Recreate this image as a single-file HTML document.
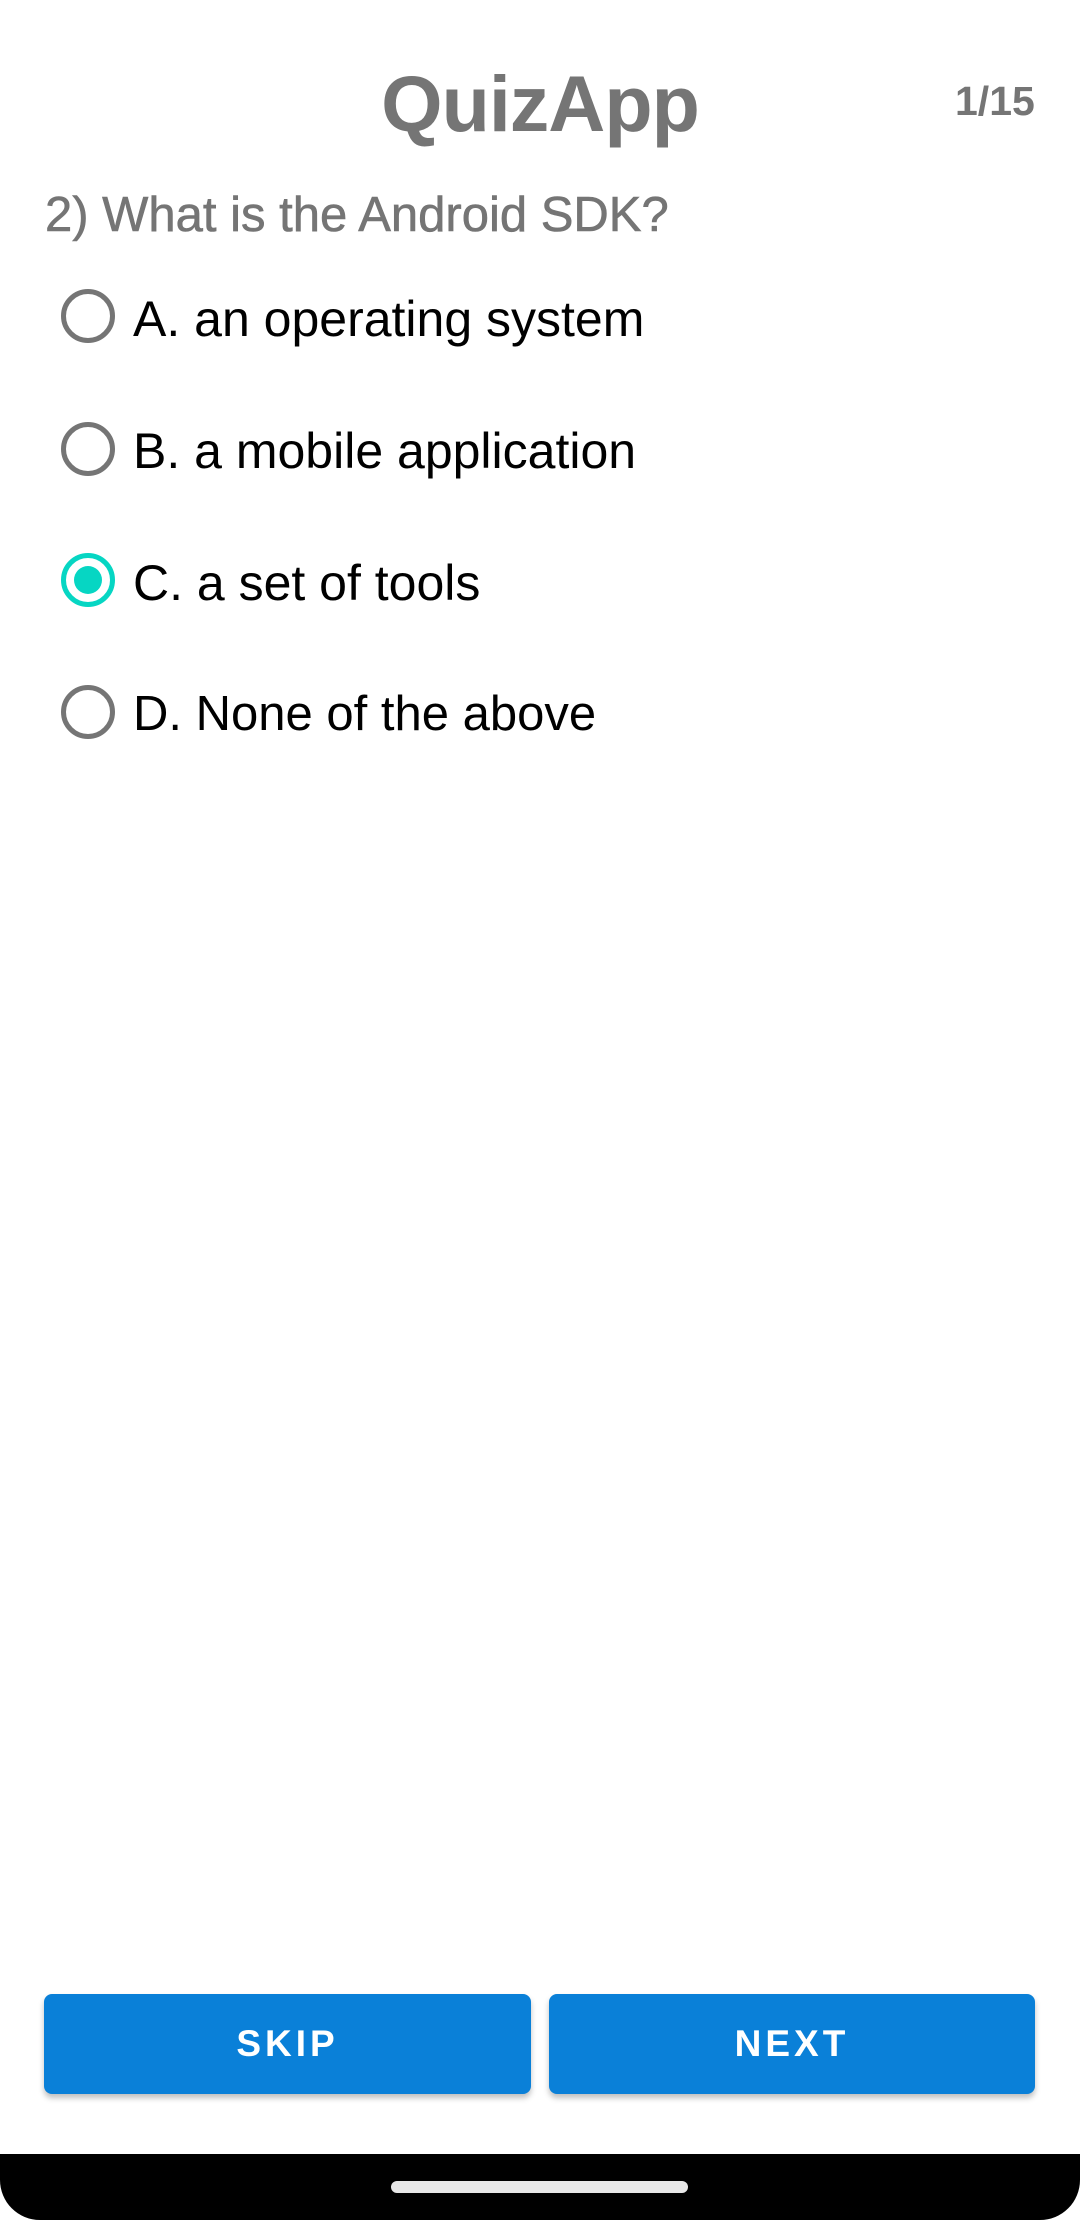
<!DOCTYPE html>
<html><head><meta charset="utf-8"><style>
html,body{margin:0;padding:0;background:#fff;}
body{width:1080px;height:2220px;position:relative;overflow:hidden;font-family:"Liberation Sans",sans-serif;}
.t{position:absolute;white-space:nowrap;line-height:1;}
.radio{position:absolute;left:61px;width:44px;height:44px;border:5px solid #757575;border-radius:50%;}
.radio.on{border-color:#06d6c3;}
.radio.on::after{content:"";position:absolute;left:8px;top:8px;width:28px;height:28px;border-radius:50%;background:#06d6c3;}
.btn{position:absolute;top:1994px;height:100px;background:#0a80d8;border-radius:8px;box-shadow:0 4px 6px rgba(0,0,0,0.25);color:#fff;font-size:37px;font-weight:bold;letter-spacing:4px;text-align:center;line-height:100px;}
</style></head><body>
<div class="t" style="left:0;width:1080px;text-align:center;top:64px;font-size:79px;font-weight:bold;color:#757575;letter-spacing:-1px;">QuizApp</div>
<div class="t" style="left:955px;top:81px;font-size:41px;font-weight:bold;color:#757575;">1/15</div>
<div class="t" style="left:45px;top:191px;font-size:49px;color:#757575;-webkit-text-stroke:0.6px #757575;">2) What is the Android SDK?</div>

<div class="radio" style="top:289px;"></div>
<div class="t" style="left:133px;top:294px;font-size:50px;color:#000;">A. an operating system</div>
<div class="radio" style="top:422px;"></div>
<div class="t" style="left:133px;top:426px;font-size:50px;color:#000;">B. a mobile application</div>
<div class="radio on" style="top:553px;"></div>
<div class="t" style="left:133px;top:558px;font-size:50px;color:#000;">C. a set of tools</div>
<div class="radio" style="top:685px;"></div>
<div class="t" style="left:133px;top:690px;font-size:49px;color:#000;">D. None of the above</div>

<div class="btn" style="left:44px;width:487px;">SKIP</div>
<div class="btn" style="left:549px;width:486px;">NEXT</div>

<div style="position:absolute;left:0;top:2154px;width:1080px;height:66px;background:#000;border-radius:0 0 40px 40px;"></div>
<div style="position:absolute;left:391px;top:2181px;width:297px;height:12px;background:#e8e8e8;border-radius:6px;"></div>
</body></html>
